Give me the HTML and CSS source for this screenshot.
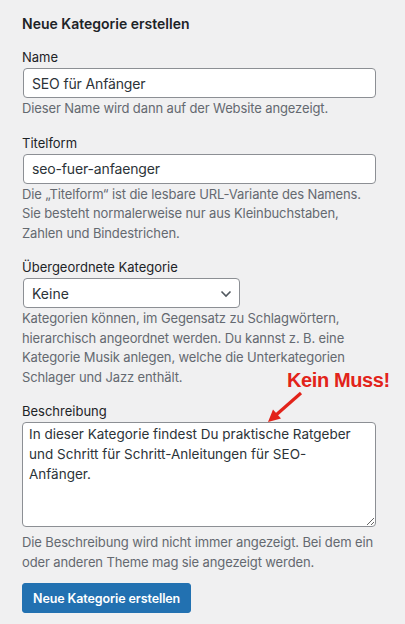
FILE: index.html
```html
<!DOCTYPE html>
<html lang="de">
<head>
    <meta charset="UTF-8">
    <title>Neue Kategorie erstellen</title>
    <link rel="stylesheet" href="styles.css">
</head>
<body>
<div class="form_wrap">
    <h2 class="form_title">Neue Kategorie erstellen</h2>

    <div class="form_field">
        <label for="tag_name">Name</label>
        <input class="text_input" id="tag_name" type="text" value="SEO für Anfänger"/>
        <p class="desc">Dieser Name wird dann auf der Website angezeigt.</p>
    </div>

    <div class="form_field">
        <label for="tag_slug">Titelform</label>
        <input class="text_input" id="tag_slug" type="text" value="seo-fuer-anfaenger"/>
        <p class="desc">Die „Titelform“ ist die lesbare URL-Variante des Namens. Sie besteht normalerweise nur aus Kleinbuchstaben, Zahlen und Bindestrichen.</p>
    </div>

    <div class="form_field">
        <label for="parent">Übergeordnete Kategorie</label>
        <div class="select_box">
            <select id="parent">
                <option>Keine</option>
            </select>
            <svg class="chevron" width="12" height="8" viewBox="0 0 12 8">
                <path d="M1.5 1.5 L6 6 L10.5 1.5" fill="none" stroke="#50575e" stroke-width="1.6"/>
            </svg>
        </div>
        <p class="desc">Kategorien können, im Gegensatz zu Schlagwörtern, hierarchisch angeordnet werden. Du kannst z. B. eine Kategorie Musik anlegen, welche die Unterkategorien Schlager und Jazz enthält.</p>
    </div>

    <div class="form_field field_desc">
        <label for="tag_desc">Beschreibung</label>
        <textarea id="tag_desc">In dieser Kategorie findest Du praktische Ratgeber und Schritt für Schritt-Anleitungen für SEO-Anfänger.</textarea>
        <p class="desc">Die Beschreibung wird nicht immer angezeigt. Bei dem ein oder anderen Theme mag sie angezeigt werden.</p>

        <!-- Hinweis im Screenshot -->
        <span class="note">Kein Muss!</span>
        <svg class="note_arrow" width="44" height="38" viewBox="0 0 44 38">
            <line x1="39" y1="4" x2="14" y2="26" stroke="#e2231a" stroke-width="3.2"/>
            <polygon points="6,33 11,20.6 19,29.6" fill="#e2231a"/>
        </svg>
    </div>

    <input type="button" class="btn_submit" value="Neue Kategorie erstellen"/>
</div>
</body>
</html>
```

FILE: styles.css
```css
* {
    margin: 0;
    padding: 0;
    box-sizing: border-box;
}
body {
    background-color: #f0f0f1;
    font-family: Inter, "Liberation Sans", Arial, sans-serif;
    color: #1d2327;
}
.form_wrap {
    width: 405px;
    padding: 14px 30px 0 22px;
}
.form_title {
    font-size: 14px;
    font-weight: 600;
    line-height: 20px;
    margin-bottom: 13px;
}
.form_field {
    margin-bottom: 14px;
}
.form_field label {
    display: block;
    font-size: 13px;
    line-height: 20px;
    color: #1d2327;
    margin-bottom: 1px;
}
.text_input {
    display: block;
    width: 353px;
    height: 30px;
    margin-left: 1px;
    padding: 0 8px;
    border: 1px solid #8c8f94;
    border-radius: 4px;
    background: #fff;
    font-family: inherit;
    font-size: 14px;
    letter-spacing: -0.15px;
    color: #2c3338;
    outline: none;
}
.desc {
    margin-top: 1px;
    font-size: 13px;
    line-height: 19.5px;
    letter-spacing: -0.12px;
    color: #646970;
}

.select_box {
    position: relative;
    width: 217px;
    height: 30px;
    margin-left: 1px;
}
.select_box select {
    width: 100%;
    height: 100%;
    padding: 0 24px 0 8px;
    border: 1px solid #8c8f94;
    border-radius: 4px;
    background: #fff;
    font-family: inherit;
    font-size: 14px;
    color: #2c3338;
    appearance: none;
    -webkit-appearance: none;
    outline: none;
}
.chevron {
    position: absolute;
    right: 8px;
    top: 12px;
}

.field_desc {
    position: relative;
    margin-bottom: 11px;
}
.field_desc textarea {
    display: block;
    width: 354px;
    height: 105px;
    padding: 1px 14px 1px 6px;
    border: 1px solid #8c8f94;
    border-radius: 4px;
    background: #fff;
    font-family: inherit;
    font-size: 13.5px;
    line-height: 20px;
    color: #2c3338;
    outline: none;
}
.field_desc .desc {
    margin-top: 6px;
}
.note {
    position: absolute;
    left: 265px;
    top: -31px;
    font-family: "Liberation Sans", Arial, sans-serif;
    font-size: 20px;
    line-height: 20px;
    font-weight: bold;
    letter-spacing: -0.4px;
    color: #e2231a;
    white-space: nowrap;
}
.note_arrow {
    position: absolute;
    left: 240px;
    top: -12px;
}

.btn_submit {
    height: 30px;
    padding: 0 10px;
    border: 1px solid #2271b1;
    border-radius: 3px;
    background-color: #2271b1;
    color: #fff;
    font-family: inherit;
    font-size: 12.5px;
    font-weight: 600;
    letter-spacing: -0.1px;
}
```
